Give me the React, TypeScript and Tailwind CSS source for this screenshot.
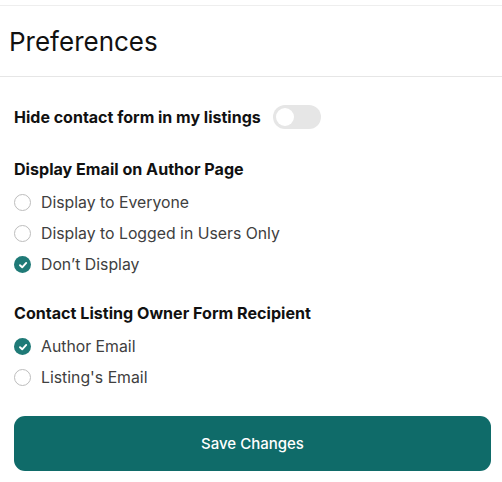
import React from "react";

function Radio({ checked, label }: { checked?: boolean; label: string }) {
  return (
    <div className="flex items-center h-[31px]">
      {checked ? (
        <span className="w-[17px] h-[17px] rounded-full bg-[#1f7a77] flex items-center justify-center shrink-0">
          <svg width="10" height="10" viewBox="0 0 10 10" fill="none">
            <path d="M2 5.2 L4.2 7.3 L8.2 2.9" stroke="white" strokeWidth="1.9" strokeLinecap="round" strokeLinejoin="round" />
          </svg>
        </span>
      ) : (
        <span className="w-[17px] h-[17px] rounded-full border-[1.7px] border-[#bdbdbd] shrink-0" />
      )}
      <span className="ml-[10px] text-[15.8px] text-[#404040]">{label}</span>
    </div>
  );
}

export default function App() {
  return (
    <div className="w-[502px] h-[482px] bg-white pt-[5px]" style={{ fontFamily: "Inter, 'Noto Sans', sans-serif" }}>
      <div className="border-t border-[#eeeeee]">
        <div className="h-[71px] flex items-center px-[9px] border-b border-[#e6e6e6]">
          <h1 className="text-[26px] text-[#111] font-normal">Preferences</h1>
        </div>
        <div className="px-[14px]">
          <div className="flex items-center mt-[28px] h-[24px]">
            <span className="text-[16px] font-bold text-[#111]">Hide contact form in my listings</span>
            <span className="ml-[12px] w-[48px] h-[24px] rounded-full bg-[#e6e6e6] relative">
              <span className="absolute left-[3px] top-[3px] w-[18px] h-[18px] rounded-full bg-white" />
            </span>
          </div>
          <div className="mt-[28px] text-[16.1px] font-bold text-[#111]">Display Email on Author Page</div>
          <div className="mt-[6px]">
            <Radio label="Display to Everyone" />
            <Radio label="Display to Logged in Users Only" />
            <Radio checked label="Don’t Display" />
          </div>
          <div className="mt-[21px] text-[16.1px] font-bold text-[#111]">Contact Listing Owner Form Recipient</div>
          <div className="mt-[6px]">
            <Radio checked label="Author Email" />
            <Radio label="Listing's Email" />
          </div>
          <button className="mt-[23px] w-[477px] h-[55px] rounded-[11px] bg-[#0f6b69] text-white text-[15px] font-medium">
            Save Changes
          </button>
        </div>
      </div>
    </div>
  );
}
